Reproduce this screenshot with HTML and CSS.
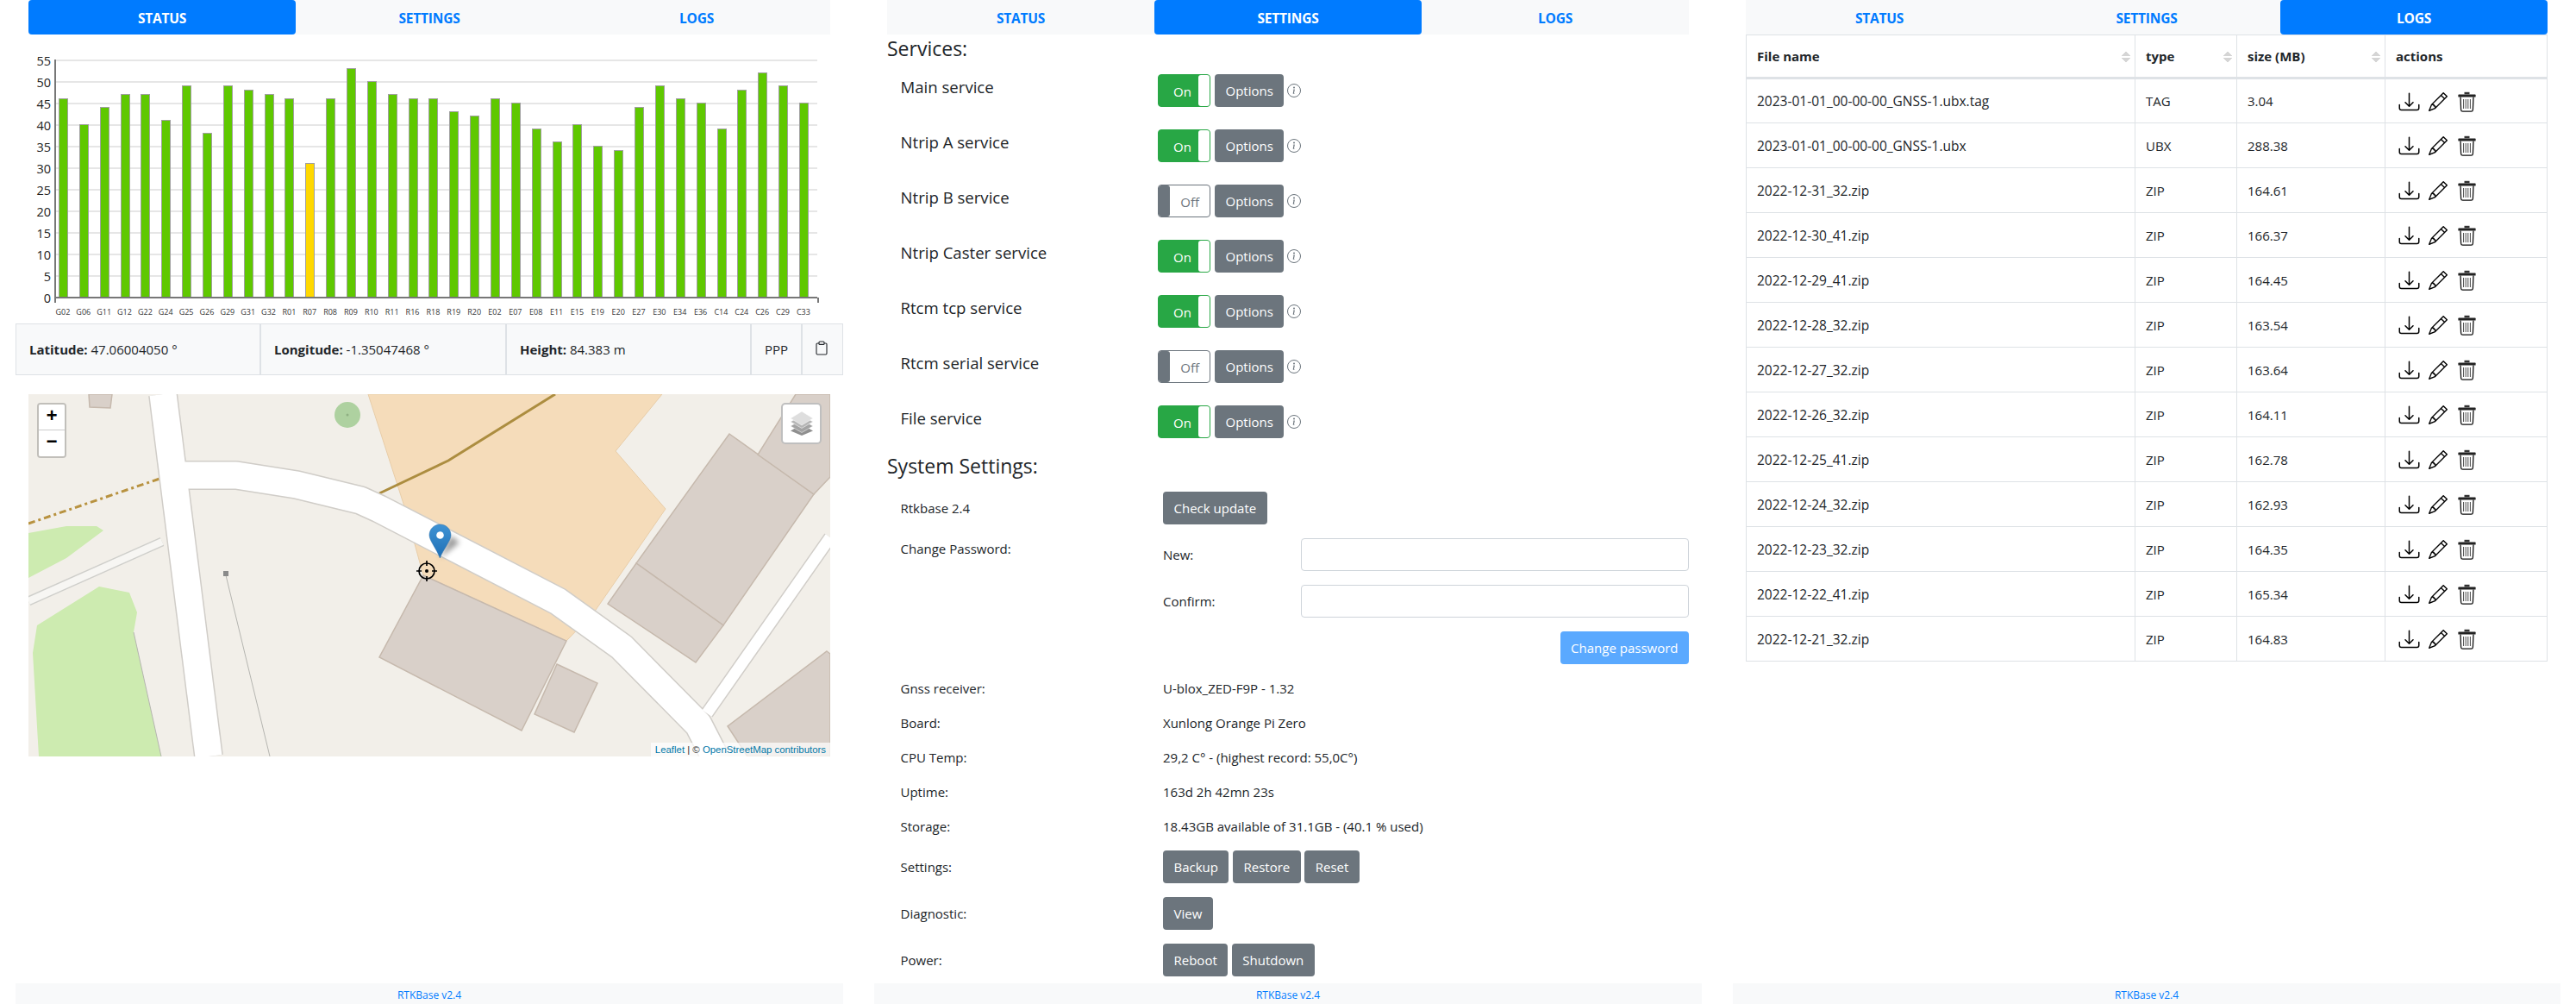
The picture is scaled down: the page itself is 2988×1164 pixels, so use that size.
FILE: index.html
```html
<!DOCTYPE html>
<html lang="en">
<head>
    <meta charset="UTF-8">
    <title>RTKBase</title>
    <link rel="stylesheet" href="styles.css">
</head>
<body>
    <svg class="icon-defs" width="0" height="0">
        <symbol id="i-download" viewBox="0 0 16 16">
            <path d="M.5 9.9a.5.5 0 0 1 .5.5v2.5a1 1 0 0 0 1 1h12a1 1 0 0 0 1-1v-2.5a.5.5 0 0 1 1 0v2.5a2 2 0 0 1-2 2H2a2 2 0 0 1-2-2v-2.5a.5.5 0 0 1 .5-.5z"/>
            <path d="M7.646 11.854a.5.5 0 0 0 .708 0l3-3a.5.5 0 0 0-.708-.708L8.5 10.293V1.5a.5.5 0 0 0-1 0v8.793L5.354 8.146a.5.5 0 1 0-.708.708l3 3z"/>
        </symbol>
        <symbol id="i-pencil" viewBox="0 0 16 16">
            <path d="M12.146.146a.5.5 0 0 1 .708 0l3 3a.5.5 0 0 1 0 .708l-10 10a.5.5 0 0 1-.168.11l-5 2a.5.5 0 0 1-.65-.65l2-5a.5.5 0 0 1 .11-.168l10-10zM11.207 2.5 13.5 4.793 14.793 3.5 12.5 1.207 11.207 2.5zm1.586 3L10.5 3.207 4 9.707V10h.5a.5.5 0 0 1 .5.5v.5h.5a.5.5 0 0 1 .5.5v.5h.293l6.5-6.5zm-9.761 5.175-.106.106-1.528 3.821 3.821-1.528.106-.106A.5.5 0 0 1 5 12.5V12h-.5a.5.5 0 0 1-.5-.5V11h-.5a.5.5 0 0 1-.468-.325z"/>
        </symbol>
        <symbol id="i-trash" viewBox="0 0 21 24">
            <path d="M7.500 .8h6v2.500h-6z" fill="#333"/>
            <path d="M1 3.600h19a.6.6 0 0 1 .6.6v2.200H.4V4.200a.6.6 0 0 1 .6-.6z" fill="#222"/>
            <path fill="none" stroke="#111" stroke-width="1.3" d="M3 6.500l.6 14.800a2 2 0 0 0 2 1.900h9.800a2 2 0 0 0 2-1.900l.6-14.800"/>
            <path fill="none" stroke="#333" stroke-width=".9" d="M6.600 9v11M9.200 9v11M11.800 9v11M14.400 9v11"/>
        </symbol>
        <symbol id="i-info" viewBox="0 0 16 16">
            <circle cx="8" cy="8" r="7.500" fill="none" stroke="currentColor"/>
            <path fill="currentColor" d="M8.900 6.600l-2 .25-.07.33.39.07c.26.06.31.15.25.41l-.65 3.050c-.17.79.09 1.160.71 1.160.48 0 1.040-.22 1.300-.53l.08-.36c-.18.16-.44.22-.61.22-.24 0-.33-.17-.27-.47z"/>
            <circle cx="8" cy="4.500" r="1" fill="currentColor"/>
        </symbol>
    </svg>

    <main class="page">
        <section class="panel">
            <nav class="tabs">
                <a class="tab active">Status</a>
                <a class="tab">Settings</a>
                <a class="tab">Logs</a>
            </nav>

            <div class="chart">
                <div class="y-axis">
                    <span>55</span><span>50</span><span>45</span><span>40</span><span>35</span><span>30</span>
                    <span>25</span><span>20</span><span>15</span><span>10</span><span>5</span><span>0</span>
                </div>
                <div class="plot">
                    <div class="sat"><div class="bar" style="height:230px"></div></div>
                    <div class="sat"><div class="bar" style="height:200px"></div></div>
                    <div class="sat"><div class="bar" style="height:220px"></div></div>
                    <div class="sat"><div class="bar" style="height:235px"></div></div>
                    <div class="sat"><div class="bar" style="height:235px"></div></div>
                    <div class="sat"><div class="bar" style="height:205px"></div></div>
                    <div class="sat"><div class="bar" style="height:245px"></div></div>
                    <div class="sat"><div class="bar" style="height:190px"></div></div>
                    <div class="sat"><div class="bar" style="height:245px"></div></div>
                    <div class="sat"><div class="bar" style="height:240px"></div></div>
                    <div class="sat"><div class="bar" style="height:235px"></div></div>
                    <div class="sat"><div class="bar" style="height:230px"></div></div>
                    <div class="sat"><div class="bar bar-low" style="height:155px"></div></div>
                    <div class="sat"><div class="bar" style="height:230px"></div></div>
                    <div class="sat"><div class="bar" style="height:265px"></div></div>
                    <div class="sat"><div class="bar" style="height:250px"></div></div>
                    <div class="sat"><div class="bar" style="height:235px"></div></div>
                    <div class="sat"><div class="bar" style="height:230px"></div></div>
                    <div class="sat"><div class="bar" style="height:230px"></div></div>
                    <div class="sat"><div class="bar" style="height:215px"></div></div>
                    <div class="sat"><div class="bar" style="height:210px"></div></div>
                    <div class="sat"><div class="bar" style="height:230px"></div></div>
                    <div class="sat"><div class="bar" style="height:225px"></div></div>
                    <div class="sat"><div class="bar" style="height:195px"></div></div>
                    <div class="sat"><div class="bar" style="height:180px"></div></div>
                    <div class="sat"><div class="bar" style="height:200px"></div></div>
                    <div class="sat"><div class="bar" style="height:175px"></div></div>
                    <div class="sat"><div class="bar" style="height:170px"></div></div>
                    <div class="sat"><div class="bar" style="height:220px"></div></div>
                    <div class="sat"><div class="bar" style="height:245px"></div></div>
                    <div class="sat"><div class="bar" style="height:230px"></div></div>
                    <div class="sat"><div class="bar" style="height:225px"></div></div>
                    <div class="sat"><div class="bar" style="height:195px"></div></div>
                    <div class="sat"><div class="bar" style="height:240px"></div></div>
                    <div class="sat"><div class="bar" style="height:260px"></div></div>
                    <div class="sat"><div class="bar" style="height:245px"></div></div>
                    <div class="sat"><div class="bar" style="height:225px"></div></div>
                </div>
                <div class="x-axis">
                    <span>G02</span><span>G06</span><span>G11</span><span>G12</span><span>G22</span><span>G24</span><span>G25</span><span>G26</span><span>G29</span><span>G31</span><span>G32</span><span>R01</span><span>R07</span><span>R08</span><span>R09</span><span>R10</span><span>R11</span><span>R16</span><span>R18</span><span>R19</span><span>R20</span><span>E02</span><span>E07</span><span>E08</span><span>E11</span><span>E15</span><span>E19</span><span>E20</span><span>E27</span><span>E30</span><span>E34</span><span>E36</span><span>C14</span><span>C24</span><span>C26</span><span>C29</span><span>C33</span>
                </div>
            </div>

            <div class="position">
                <div class="pos-cell"><b>Latitude:</b> 47.06004050 °</div>
                <div class="pos-cell"><b>Longitude:</b> -1.35047468 °</div>
                <div class="pos-cell"><b>Height:</b> 84.383 m</div>
                <div class="pos-cell">PPP</div>
                <div class="pos-cell pos-copy">
                    <svg width="16" height="17" viewBox="0 0 16 17" fill="none" stroke="#212529" stroke-width="1.100">
                        <path d="M5 3H3.200C2.500 3 2 3.500 2 4.200v10.600c0 .7.5 1.200 1.200 1.200h9.600c.7 0 1.200-.5 1.200-1.200V4.200c0-.7-.5-1.200-1.200-1.200H11"/>
                        <rect x="5" y="1" width="6" height="3.400" rx="1"/>
                    </svg>
                </div>
            </div>

            <div class="map">
                <svg class="map-tiles" viewBox="0 0 930 420" width="930" height="420">
                    <defs>
                        <linearGradient id="pin-blue" x1="0" y1="0" x2="0" y2="1">
                            <stop offset="0" stop-color="#3f93d4"/>
                            <stop offset="1" stop-color="#1f6fb5"/>
                        </linearGradient>
                        <filter id="pin-shadow" x="-50%" y="-50%" width="200%" height="200%">
                            <feGaussianBlur stdDeviation="3"/>
                        </filter>
                        <filter id="tile-blur"><feGaussianBlur stdDeviation="0.5"/></filter>
                    </defs>
                    <rect width="930" height="420" fill="#f2efe9"/>
                    <g filter="url(#tile-blur)">
                        <polygon class="m-farm" points="394,0 735,0 681,66 739,133 656,253 624,286 458,210 436,130"/>
                        <polygon class="m-grass" points="0,161 44,153 79,153 87,158 44,190 0,213"/>
                        <polygon class="m-grass" points="82,223 117,230 126,253 122,276 154,420 12,420 5,300 10,268"/>
                        <circle cx="370" cy="24" r="15" fill="#aed1a0"/>
                        <circle cx="370" cy="24" r="1.500" fill="#8fb082"/>
                        <polygon class="m-building" points="70,0 97,0 95,16 71,15"/>
                        <polygon class="m-building" points="458,210 624,286 572,390 407,305"/>
                        <polygon class="m-building" points="613,313 660,335 633,392 587,371"/>
                        <polygon class="m-building" points="813,46 911,116 806,268 705,196"/>
                        <polygon class="m-building" points="705,196 806,268 774,311 672,243"/>
                        <polygon class="m-building" points="890,0 930,0 930,96 911,116 846,70"/>
                        <polygon class="m-building" points="926,298 930,301 930,420 834,420 811,385"/>
                        <polyline class="m-thin" points="122,276 154,420"/>
                        <polyline class="m-thin" points="229,210 280,420"/>
                        <rect x="226" y="205" width="6" height="6" fill="#8a8a8a"/>
                        <polyline class="m-track" points="407,115 487,77 611,0"/>
                        <polyline class="m-trail" points="0,150 152,98"/>
                        <polyline class="m-path-case" points="0,240 155,171"/>
                        <polyline class="m-path" points="0,240 155,171"/>
                        <polyline class="m-case m-side" points="930,166 787,370"/>
                        <polyline class="m-case" points="156,0 209,420"/>
                        <polyline class="m-case" points="171,94 241,94 311,105 385,123 407,133 614,240 688,293 777,383 796,420"/>
                        <polyline class="m-road m-side" points="930,166 787,370"/>
                        <polyline class="m-road" points="156,0 209,420"/>
                        <polyline class="m-road" points="171,94 241,94 311,105 385,123 407,133 614,240 688,293 777,383 796,420"/>
                    </g>
                    <path d="M477 190L490 164 500 172z" fill="#000" opacity=".4" filter="url(#pin-shadow)"/>
                    <path d="M477.500 151C470 151 465 157 465 163.500 465 170 474 180 477.300 190 481 180 490 170 490 163.500 490 157 485 151 477.500 151Z" fill="url(#pin-blue)" stroke="#2a6fa8" stroke-width=".5"/>
                    <circle cx="477.500" cy="163.500" r="4.300" fill="#fff"/>
                    <g fill="none" stroke="#000" stroke-width="1.700">
                        <circle cx="462" cy="205" r="9"/>
                        <path d="M462 193v6M462 211v6M450 205h6M468 205h6"/>
                    </g>
                    <circle cx="462" cy="205" r="2" fill="#000"/>
                </svg>
                <div class="zoom-box">
                    <a class="zoom-btn">+</a>
                    <a class="zoom-btn">&minus;</a>
                </div>
                <div class="layers-box">
                    <svg width="28" height="28" viewBox="0 0 28 28">
                        <path d="M14 15l13 7.500L14 28 1 22.500z" fill="#8f8f8f"/>
                        <path d="M14 9.500l13 7.500-13 7.500L1 17z" fill="#a3a3a3" stroke="#fff" stroke-width=".5"/>
                        <path d="M14 4.500l13 7.500-13 7.500L1 12z" fill="#b6b6b6" stroke="#fff" stroke-width=".5"/>
                        <path d="M14 0l13 8-13 8L1 8z" fill="#dedede" stroke="#fff" stroke-width=".5"/>
                    </svg>
                </div>
                <div class="attribution"><a>Leaflet</a> | © <a>OpenStreetMap contributors</a></div>
            </div>

            <footer class="footer"><a>RTKBase v2.4</a></footer>
        </section>

        <section class="panel">
            <nav class="tabs">
                <a class="tab">Status</a>
                <a class="tab active">Settings</a>
                <a class="tab">Logs</a>
            </nav>

            <div class="settings">
                <h4 class="section-title">Services:</h4>
                <div class="services">
                    <div class="service">
                        <div class="service-name">Main service</div>
                        <div class="toggle"><span>On</span></div>
                        <a class="btn">Options</a>
                        <svg class="info"><use href="#i-info"/></svg>
                    </div>
                    <div class="service">
                        <div class="service-name">Ntrip A service</div>
                        <div class="toggle"><span>On</span></div>
                        <a class="btn">Options</a>
                        <svg class="info"><use href="#i-info"/></svg>
                    </div>
                    <div class="service">
                        <div class="service-name">Ntrip B service</div>
                        <div class="toggle off"><span>Off</span></div>
                        <a class="btn">Options</a>
                        <svg class="info"><use href="#i-info"/></svg>
                    </div>
                    <div class="service">
                        <div class="service-name">Ntrip Caster service</div>
                        <div class="toggle"><span>On</span></div>
                        <a class="btn">Options</a>
                        <svg class="info"><use href="#i-info"/></svg>
                    </div>
                    <div class="service">
                        <div class="service-name">Rtcm tcp service</div>
                        <div class="toggle"><span>On</span></div>
                        <a class="btn">Options</a>
                        <svg class="info"><use href="#i-info"/></svg>
                    </div>
                    <div class="service">
                        <div class="service-name">Rtcm serial service</div>
                        <div class="toggle off"><span>Off</span></div>
                        <a class="btn">Options</a>
                        <svg class="info"><use href="#i-info"/></svg>
                    </div>
                    <div class="service">
                        <div class="service-name">File service</div>
                        <div class="toggle"><span>On</span></div>
                        <a class="btn">Options</a>
                        <svg class="info"><use href="#i-info"/></svg>
                    </div>
                </div>

                <h4 class="section-title system-title">System Settings:</h4>
                <div class="system">
                    <div class="sys-label">Rtkbase 2.4</div>
                    <div class="btn-row"><a class="btn">Check update</a></div>

                    <div class="sys-label sys-top">Change Password:</div>
                    <form class="password">
                        <label>New:</label><input type="password">
                        <label>Confirm:</label><input type="password">
                        <a class="btn btn-disabled">Change password</a>
                    </form>

                    <div class="sys-label">Gnss receiver:</div>
                    <div>U-blox_ZED-F9P - 1.32</div>
                    <div class="sys-label">Board:</div>
                    <div>Xunlong Orange Pi Zero</div>
                    <div class="sys-label">CPU Temp:</div>
                    <div>29,2 C° - (highest record: 55,0C°)</div>
                    <div class="sys-label">Uptime:</div>
                    <div>163d 2h 42mn 23s</div>
                    <div class="sys-label">Storage:</div>
                    <div>18.43GB available of 31.1GB - (40.1 % used)</div>

                    <div class="sys-label">Settings:</div>
                    <div class="btn-row"><a class="btn">Backup</a><a class="btn">Restore</a><a class="btn">Reset</a></div>
                    <div class="sys-label">Diagnostic:</div>
                    <div class="btn-row"><a class="btn">View</a></div>
                    <div class="sys-label">Power:</div>
                    <div class="btn-row"><a class="btn">Reboot</a><a class="btn">Shutdown</a></div>
                </div>
            </div>

            <footer class="footer"><a>RTKBase v2.4</a></footer>
        </section>

        <section class="panel">
            <nav class="tabs">
                <a class="tab">Status</a>
                <a class="tab">Settings</a>
                <a class="tab active">Logs</a>
            </nav>

            <table class="logs">
                <colgroup>
                    <col class="col-name"><col class="col-type"><col class="col-size"><col>
                </colgroup>
                <thead>
                    <tr>
                        <th class="sortable">File name</th>
                        <th class="sortable">type</th>
                        <th class="sortable">size (MB)</th>
                        <th>actions</th>
                    </tr>
                </thead>
                <tbody>
                    <tr><td class="file">2023-01-01_00-00-00_GNSS-1.ubx.tag</td><td>TAG</td><td>3.04</td><td class="actions"><svg class="a-dl"><use href="#i-download"/></svg><svg class="a-ed"><use href="#i-pencil"/></svg><svg class="a-rm"><use href="#i-trash"/></svg></td></tr>
                    <tr><td class="file">2023-01-01_00-00-00_GNSS-1.ubx</td><td>UBX</td><td>288.38</td><td class="actions"><svg class="a-dl"><use href="#i-download"/></svg><svg class="a-ed"><use href="#i-pencil"/></svg><svg class="a-rm"><use href="#i-trash"/></svg></td></tr>
                    <tr><td class="file">2022-12-31_32.zip</td><td>ZIP</td><td>164.61</td><td class="actions"><svg class="a-dl"><use href="#i-download"/></svg><svg class="a-ed"><use href="#i-pencil"/></svg><svg class="a-rm"><use href="#i-trash"/></svg></td></tr>
                    <tr><td class="file">2022-12-30_41.zip</td><td>ZIP</td><td>166.37</td><td class="actions"><svg class="a-dl"><use href="#i-download"/></svg><svg class="a-ed"><use href="#i-pencil"/></svg><svg class="a-rm"><use href="#i-trash"/></svg></td></tr>
                    <tr><td class="file">2022-12-29_41.zip</td><td>ZIP</td><td>164.45</td><td class="actions"><svg class="a-dl"><use href="#i-download"/></svg><svg class="a-ed"><use href="#i-pencil"/></svg><svg class="a-rm"><use href="#i-trash"/></svg></td></tr>
                    <tr><td class="file">2022-12-28_32.zip</td><td>ZIP</td><td>163.54</td><td class="actions"><svg class="a-dl"><use href="#i-download"/></svg><svg class="a-ed"><use href="#i-pencil"/></svg><svg class="a-rm"><use href="#i-trash"/></svg></td></tr>
                    <tr><td class="file">2022-12-27_32.zip</td><td>ZIP</td><td>163.64</td><td class="actions"><svg class="a-dl"><use href="#i-download"/></svg><svg class="a-ed"><use href="#i-pencil"/></svg><svg class="a-rm"><use href="#i-trash"/></svg></td></tr>
                    <tr><td class="file">2022-12-26_32.zip</td><td>ZIP</td><td>164.11</td><td class="actions"><svg class="a-dl"><use href="#i-download"/></svg><svg class="a-ed"><use href="#i-pencil"/></svg><svg class="a-rm"><use href="#i-trash"/></svg></td></tr>
                    <tr><td class="file">2022-12-25_41.zip</td><td>ZIP</td><td>162.78</td><td class="actions"><svg class="a-dl"><use href="#i-download"/></svg><svg class="a-ed"><use href="#i-pencil"/></svg><svg class="a-rm"><use href="#i-trash"/></svg></td></tr>
                    <tr><td class="file">2022-12-24_32.zip</td><td>ZIP</td><td>162.93</td><td class="actions"><svg class="a-dl"><use href="#i-download"/></svg><svg class="a-ed"><use href="#i-pencil"/></svg><svg class="a-rm"><use href="#i-trash"/></svg></td></tr>
                    <tr><td class="file">2022-12-23_32.zip</td><td>ZIP</td><td>164.35</td><td class="actions"><svg class="a-dl"><use href="#i-download"/></svg><svg class="a-ed"><use href="#i-pencil"/></svg><svg class="a-rm"><use href="#i-trash"/></svg></td></tr>
                    <tr><td class="file">2022-12-22_41.zip</td><td>ZIP</td><td>165.34</td><td class="actions"><svg class="a-dl"><use href="#i-download"/></svg><svg class="a-ed"><use href="#i-pencil"/></svg><svg class="a-rm"><use href="#i-trash"/></svg></td></tr>
                    <tr><td class="file">2022-12-21_32.zip</td><td>ZIP</td><td>164.83</td><td class="actions"><svg class="a-dl"><use href="#i-download"/></svg><svg class="a-ed"><use href="#i-pencil"/></svg><svg class="a-rm"><use href="#i-trash"/></svg></td></tr>
                </tbody>
            </table>

            <footer class="footer"><a>RTKBase v2.4</a></footer>
        </section>
    </main>
</body>
</html>
```

FILE: styles.css
```css
* {
    box-sizing: border-box;
}

body {
    margin: 0;
    font-family: "Open Sans", "Noto Sans", sans-serif;
    font-size: 15px;
    line-height: 24px;
    color: #212529;
    background-color: #fff;
}

.icon-defs {
    position: absolute;
}

.page {
    display: grid;
    grid-template-columns: repeat(3, 960px);
    column-gap: 36px;
    padding: 0 18px;
    height: 100vh;
    overflow: hidden;
}

.panel {
    display: flex;
    flex-direction: column;
    height: 100%;
}

/* tabs */
.tabs {
    display: flex;
    flex: none;
    height: 40px;
    margin: 0 15px;
    background-color: #f8f9fa;
}

.tab {
    flex: 1;
    text-align: center;
    line-height: 42px;
    font-size: 15.500px;
    font-weight: 700;
    letter-spacing: -0.2px;
    text-transform: uppercase;
    color: #007bff;
}

.tab.active {
    color: #fff;
    background-color: #007bff;
    border-radius: 4px;
}

.footer {
    flex: none;
    height: 24px;
    margin-top: auto;
    background-color: #f8f9fa;
    text-align: center;
    font-size: 12px;
    line-height: 27px;
    color: #007bff;
}

/* status */
.chart {
    display: grid;
    grid-template-columns: 30px 885px;
    margin: 29px 15px 0;
}

.y-axis {
    display: flex;
    flex-direction: column;
    height: 277px;
    margin-top: -11.500px;
    padding-right: 4px;
    text-align: right;
    font-size: 14.500px;
    color: #222;
}

.y-axis span {
    flex: none;
    height: 25px;
    line-height: 25px;
}

.plot {
    position: relative;
    display: flex;
    align-items: flex-end;
    height: 277px;
    border-left: 2px solid #777;
    border-bottom: 2px solid #777;
    background-image: repeating-linear-gradient(#e6e6e6 0 2px, transparent 2px 25px);
}

.plot::before,
.plot::after {
    content: "";
    position: absolute;
    bottom: -7px;
    width: 2px;
    height: 6px;
    background-color: #777;
}

.plot::before {
    left: -2px;
}

.plot::after {
    right: -2px;
}

.sat {
    flex: 1;
}

.bar {
    width: 11px;
    margin-left: 3px;
    background-color: #5fc800;
    border: 1px solid #a0a0a0;
    border-bottom: 0;
}

.bar-low {
    background-color: #ffd800;
}

.x-axis {
    grid-column: 2;
    display: flex;
    width: 883px;
    margin: 8px 0 0 -2px;
    font-size: 9px;
    line-height: 15px;
    text-align: center;
    color: #333;
}

.x-axis span {
    flex: 1;
    white-space: nowrap;
}

.position {
    display: grid;
    flex: none;
    grid-template-columns: 284px 285px 284px 59px 48px;
    height: 58px;
    margin-top: 6px;
}

.pos-cell {
    padding-left: 15px;
    line-height: 58px;
    background-color: #f8f9fa;
    border: 1px solid #dee2e6;
    white-space: nowrap;
}

.pos-copy {
    display: flex;
    align-items: center;
    padding: 0 0 4px 14px;
}

.map {
    position: relative;
    flex: none;
    width: 930px;
    height: 420px;
    margin: 24px 15px 0;
    overflow: hidden;
}

.map-tiles {
    display: block;
}

.m-building {
    fill: #d9d0c9;
    stroke: #c6b9ad;
    stroke-width: 1.500;
}

.m-farm {
    fill: #f5dcba;
    stroke: #e8cda8;
}

.m-grass {
    fill: #cdebb0;
}

.m-thin {
    fill: none;
    stroke: #b5b5b0;
    stroke-width: 1;
}

.m-track {
    fill: none;
    stroke: #ac8d3f;
    stroke-width: 3;
}

.m-trail {
    fill: none;
    stroke: #b8923f;
    stroke-width: 3;
    stroke-dasharray: 8 4 3 4;
}

.m-path-case {
    fill: none;
    stroke: #cfcfcb;
    stroke-width: 11;
}

.m-path {
    fill: none;
    stroke: #f7f6f3;
    stroke-width: 8;
}

.m-case {
    fill: none;
    stroke: #d0cdc8;
    stroke-width: 34;
    stroke-linejoin: round;
}

.m-road {
    fill: none;
    stroke: #fff;
    stroke-width: 31;
    stroke-linejoin: round;
}

.m-case.m-side {
    stroke-width: 16;
}

.m-road.m-side {
    stroke-width: 13;
}

.zoom-box {
    position: absolute;
    top: 10px;
    left: 10px;
    width: 34px;
    border: 2px solid rgba(0, 0, 0, 0.2);
    border-radius: 4px;
}

.zoom-btn {
    display: block;
    height: 30px;
    background-color: #fff;
    text-align: center;
    font-family: "Liberation Mono", monospace;
    font-size: 22px;
    font-weight: 700;
    line-height: 30px;
    color: #000;
}

.zoom-btn:first-child {
    border-bottom: 1px solid #ccc;
    border-radius: 2px 2px 0 0;
}

.zoom-btn:last-child {
    border-radius: 0 0 2px 2px;
}

.layers-box {
    position: absolute;
    top: 10px;
    right: 10px;
    display: flex;
    align-items: center;
    justify-content: center;
    width: 47px;
    height: 48px;
    background-color: #fff;
    border: 2px solid rgba(0, 0, 0, 0.25);
    border-radius: 5px;
}

.attribution {
    position: absolute;
    right: 0;
    bottom: 0;
    padding: 0 5px;
    background-color: rgba(255, 255, 255, 0.7);
    font-family: "Liberation Sans", sans-serif;
    font-size: 11.400px;
    line-height: 16px;
    color: #333;
}

.attribution a {
    color: #0078a8;
}

/* settings */
.settings {
    padding: 0 15px;
}

.section-title {
    margin: 2px 0 15px;
    font-size: 23px;
    font-weight: 400;
    line-height: 29px;
}

.system-title {
    margin: 18px 0 15px;
}

.services {
    display: flex;
    flex-direction: column;
    gap: 26px;
}

.service {
    display: flex;
    align-items: flex-start;
    height: 38px;
}

.service-name {
    width: 314px;
    padding: 0 0 0 15.500px;
    font-size: 18.600px;
    line-height: 29px;
}

.toggle {
    position: relative;
    display: flex;
    align-items: center;
    width: 61px;
    height: 38px;
    margin-right: 5px;
    padding: 2px 0 0 17px;
    color: #fff;
    background-color: #28a745;
    border: 1px solid #28a745;
    border-radius: 4px;
}

.toggle::after {
    content: "";
    position: absolute;
    top: 0;
    bottom: 0;
    right: 0;
    width: 13px;
    background-color: #fff;
    border-radius: 3px;
}

.toggle.off {
    justify-content: flex-end;
    padding: 2px 12px 0 0;
    color: #6c757d;
    background-color: #fff;
    border-color: #6c757d;
}

.toggle.off::after {
    right: auto;
    left: 0;
    background-color: #6c757d;
}

.btn {
    display: inline-block;
    height: 38px;
    padding: 0 12.500px;
    line-height: 39px;
    white-space: nowrap;
    color: #fff;
    background-color: #6c757d;
    border-radius: 4px;
}

.info {
    width: 16px;
    height: 16px;
    margin: 11px 0 0 4px;
    color: #6c757d;
}

.system {
    display: grid;
    grid-template-columns: 320px 1fr;
    row-gap: 16px;
    align-items: center;
}

.sys-label {
    padding-left: 15.500px;
}

.sys-top {
    align-self: start;
}

.btn-row {
    display: flex;
    gap: 4.500px;
}

.password {
    display: grid;
    grid-template-columns: 160px 1fr;
    row-gap: 16px;
    align-items: center;
    margin: 0;
}

.password input {
    height: 38px;
    border: 1px solid #ced4da;
    border-radius: 4px;
    background-color: #fff;
}

.password .btn {
    grid-column: 1 / 3;
    justify-self: end;
}

.btn-disabled {
    background-color: #5aa9ff;
}

/* logs */
.logs {
    width: 930px;
    margin: 0 15px;
    border-collapse: collapse;
    table-layout: fixed;
}

.col-name {
    width: 451px;
}

.col-type {
    width: 118px;
}

.col-size {
    width: 172px;
}

.logs th,
.logs td {
    padding: 0 12px;
    border: 1px solid #dee2e6;
    text-align: left;
}

.logs th {
    height: 50px;
    font-weight: 700;
    border-bottom-width: 3px;
}

.logs td {
    height: 52px;
}

.file {
    font-size: 15.500px;
}

.sortable {
    background-image:
        linear-gradient(135deg, transparent 50%, #d5d5d5 50%),
        linear-gradient(225deg, transparent 50%, #d5d5d5 50%),
        linear-gradient(45deg, transparent 50%, #d5d5d5 50%),
        linear-gradient(-45deg, transparent 50%, #d5d5d5 50%);
    background-size: 5px 6px;
    background-repeat: no-repeat;
    background-position: right 10px top 18px, right 5px top 18px, right 10px top 26px, right 5px top 26px;
}

.actions svg {
    vertical-align: middle;
}

.a-dl {
    width: 25px;
    height: 24px;
    margin: 0 10px 0 3px;
}

.a-ed {
    width: 22px;
    height: 22px;
    margin-right: 12px;
}

.a-rm {
    width: 21px;
    height: 24px;
}
```
